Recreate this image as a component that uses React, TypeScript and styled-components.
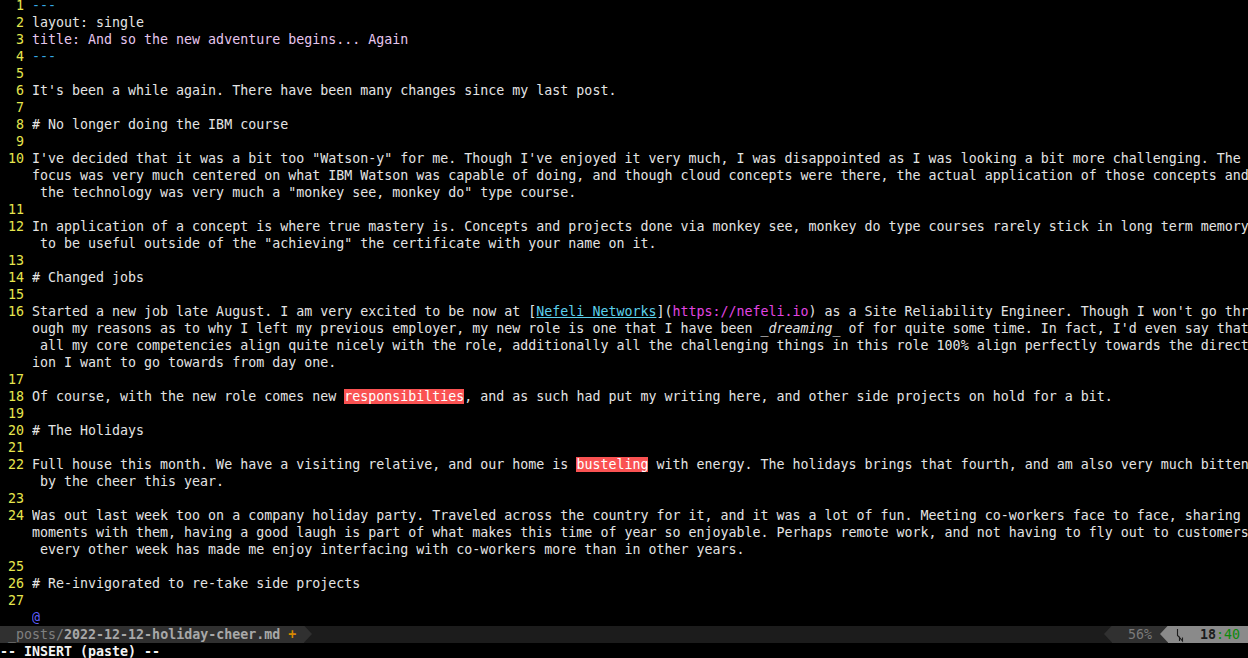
import React from "react";
import styled, { createGlobalStyle } from "styled-components";

const CELL = 8;
const ROW = 17;

type Kind = "text" | "front" | "title" | "link" | "url" | "em" | "mark" | "end";
type Seg = [Kind, string];
type Line = { num?: number; segs: Seg[] };

const t = (s: string): Seg => ["text", s];

const lines: Line[] = [
  { num: 1, segs: [["front", "---"]] },
  { num: 2, segs: [t("layout: single")] },
  { num: 3, segs: [["title", "title: And so the new adventure begins... Again"]] },
  { num: 4, segs: [["front", "---"]] },
  { num: 5, segs: [] },
  { num: 6, segs: [t("It's been a while again. There have been many changes since my last post.")] },
  { num: 7, segs: [] },
  { num: 8, segs: [t("# No longer doing the IBM course")] },
  { num: 9, segs: [] },
  {
    num: 10,
    segs: [
      t(
        'I\'ve decided that it was a bit too "Watson-y" for me. Though I\'ve enjoyed it very much, I was disappointed as I was looking a bit more challenging. The '
      ),
    ],
  },
  {
    segs: [
      t(
        "focus was very much centered on what IBM Watson was capable of doing, and though cloud concepts were there, the actual application of those concepts and"
      ),
    ],
  },
  { segs: [t(' the technology was very much a "monkey see, monkey do" type course.')] },
  { num: 11, segs: [] },
  {
    num: 12,
    segs: [
      t(
        "In application of a concept is where true mastery is. Concepts and projects done via monkey see, monkey do type courses rarely stick in long term memory"
      ),
    ],
  },
  { segs: [t(' to be useful outside of the "achieving" the certificate with your name on it.')] },
  { num: 13, segs: [] },
  { num: 14, segs: [t("# Changed jobs")] },
  { num: 15, segs: [] },
  {
    num: 16,
    segs: [
      t("Started a new job late August. I am very excited to be now at ["),
      ["link", "Nefeli Networks"],
      t("]("),
      ["url", "https://nefeli.io"],
      t(") as a Site Reliability Engineer. Though I won't go thr"),
    ],
  },
  {
    segs: [
      t("ough my reasons as to why I left my previous employer, my new role is one that I have been "),
      ["em", "_dreaming_"],
      t(" of for quite some time. In fact, I'd even say that"),
    ],
  },
  {
    segs: [
      t(
        " all my core competencies align quite nicely with the role, additionally all the challenging things in this role 100% align perfectly towards the direct"
      ),
    ],
  },
  { segs: [t("ion I want to go towards from day one.")] },
  { num: 17, segs: [] },
  {
    num: 18,
    segs: [
      t("Of course, with the new role comes new "),
      ["mark", "responsibilties"],
      t(", and as such had put my writing here, and other side projects on hold for a bit."),
    ],
  },
  { num: 19, segs: [] },
  { num: 20, segs: [t("# The Holidays")] },
  { num: 21, segs: [] },
  {
    num: 22,
    segs: [
      t("Full house this month. We have a visiting relative, and our home is "),
      ["mark", "busteling"],
      t(" with energy. The holidays brings that fourth, and am also very much bitten"),
    ],
  },
  { segs: [t(" by the cheer this year.")] },
  { num: 23, segs: [] },
  {
    num: 24,
    segs: [
      t(
        "Was out last week too on a company holiday party. Traveled across the country for it, and it was a lot of fun. Meeting co-workers face to face, sharing "
      ),
    ],
  },
  {
    segs: [
      t(
        "moments with them, having a good laugh is part of what makes this time of year so enjoyable. Perhaps remote work, and not having to fly out to customers"
      ),
    ],
  },
  { segs: [t(" every other week has made me enjoy interfacing with co-workers more than in other years.")] },
  { num: 25, segs: [] },
  { num: 26, segs: [t("# Re-invigorated to re-take side projects")] },
  { num: 27, segs: [] },
  { segs: [["end", "@"]] },
];

const GlobalStyle = createGlobalStyle`
  html, body {
    margin: 0;
    padding: 0;
    background: #000;
    overflow: hidden;
  }
  body {
    font-family: "DejaVu Sans Mono", "Liberation Mono", monospace;
    font-size: 13.3px;
    line-height: ${ROW}px;
    color: #e4e4e4;
  }
`;

const Terminal = styled.div`
  width: 1248px;
  height: 658px;
  overflow: hidden;
  background: #000;
`;

const Screen = styled.div`
  display: flex;
  flex-direction: column;
  margin-top: -3.5px;
`;

const Row = styled.div`
  display: flex;
  height: ${ROW}px;
  white-space: pre;
`;

const Gutter = styled.span`
  flex: 0 0 ${CELL * 3}px;
  margin-right: ${CELL}px;
  text-align: right;
  color: #e6e64e;
`;

const Content = styled.span`
  flex: 1;
  overflow: hidden;
`;

const Front = styled.span`
  color: #34a9e4;
`;

const Title = styled.span`
  color: #e6c6ee;
`;

const Link = styled.span`
  color: #5cd0ec;
  text-decoration: underline;
`;

const Url = styled.span`
  color: #e245e2;
`;

const Em = styled.span`
  font-style: italic;
`;

const Mark = styled.span`
  background: #fa5252;
  color: #fff;
`;

const EndMark = styled.span`
  color: #5f5fff;
`;

const StatusBar = styled.div`
  display: flex;
  height: ${ROW}px;
  background: #1c1c1c;
`;

const Segment = styled.div<{ $bg: string; $cols: number }>`
  flex: 0 0 ${(p) => p.$cols * CELL}px;
  height: ${ROW}px;
  background: ${(p) => p.$bg};
  white-space: pre;
  overflow: hidden;
`;

const Filler = styled.div`
  flex: 1;
`;

const Arrow = styled.div<{ $color: string; $bg: string; $left?: boolean }>`
  flex: 0 0 ${CELL}px;
  height: ${ROW}px;
  background: ${(p) => p.$bg};
  &::after {
    content: "";
    display: block;
    width: 100%;
    height: 100%;
    background: ${(p) => p.$color};
    clip-path: ${(p) =>
      p.$left ? "polygon(100% 0, 0 50%, 100% 100%)" : "polygon(0 0, 100% 50%, 0 100%)"};
  }
`;

const Dir = styled.span`
  color: #808080;
`;

const FileName = styled.span`
  color: #a8a8a8;
  font-weight: bold;
`;

const Modified = styled.span`
  color: #d78700;
  font-weight: bold;
`;

const Percent = styled.span`
  color: #7a7a7a;
`;

const LineNo = styled.span`
  color: #1c1c1c;
  font-weight: bold;
`;

const ColNo = styled.span`
  color: #0c8a0c;
`;

const IconCell = styled.svg`
  vertical-align: top;
`;

const Mode = styled.div`
  height: ${ROW}px;
  font-weight: bold;
  color: #f4f4f4;
  white-space: pre;
`;

function LnIcon() {
  return (
    <IconCell width={CELL} height={ROW} viewBox="0 0 8 17" fill="none" stroke="#1c1c1c" strokeWidth="1.1">
      <path d="M1.5 3 V9.5 L3.2 11" />
      <path d="M3.5 15 V11.5 L6.5 15 V11.5" />
    </IconCell>
  );
}

function renderSeg([kind, text]: Seg, i: number) {
  switch (kind) {
    case "front":
      return <Front key={i}>{text}</Front>;
    case "title":
      return <Title key={i}>{text}</Title>;
    case "link":
      return <Link key={i}>{text}</Link>;
    case "url":
      return <Url key={i}>{text}</Url>;
    case "em":
      return <Em key={i}>{text}</Em>;
    case "mark":
      return <Mark key={i}>{text}</Mark>;
    case "end":
      return <EndMark key={i}>{text}</EndMark>;
    default:
      return <React.Fragment key={i}>{text}</React.Fragment>;
  }
}

export default function App() {
  return (
    <Terminal>
      <GlobalStyle />
      <Screen>
        {lines.map((line, i) => (
          <Row key={i}>
            <Gutter>{line.num ?? ""}</Gutter>
            <Content>{line.segs.map(renderSeg)}</Content>
          </Row>
        ))}
        <StatusBar>
          <Segment $bg="#303030" $cols={38}>
            {" "}
            <Dir>_posts/</Dir>
            <FileName>2022-12-12-holiday-cheer.md</FileName>
            {" "}
            <Modified>+</Modified>
            {" "}
          </Segment>
          <Arrow $color="#303030" $bg="#1c1c1c" />
          <Filler />
          <Arrow $color="#303030" $bg="#1c1c1c" $left />
          <Segment $bg="#303030" $cols={6}>
            {"  "}
            <Percent>56%</Percent>
            {" "}
          </Segment>
          <Arrow $color="#8a8a8a" $bg="#303030" $left />
          <Segment $bg="#8a8a8a" $cols={10}>
            {" "}
            <LnIcon />
            {"  "}
            <LineNo>18</LineNo>
            <ColNo>:40</ColNo>
            {" "}
          </Segment>
        </StatusBar>
        <Mode>-- INSERT (paste) --</Mode>
      </Screen>
    </Terminal>
  );
}
